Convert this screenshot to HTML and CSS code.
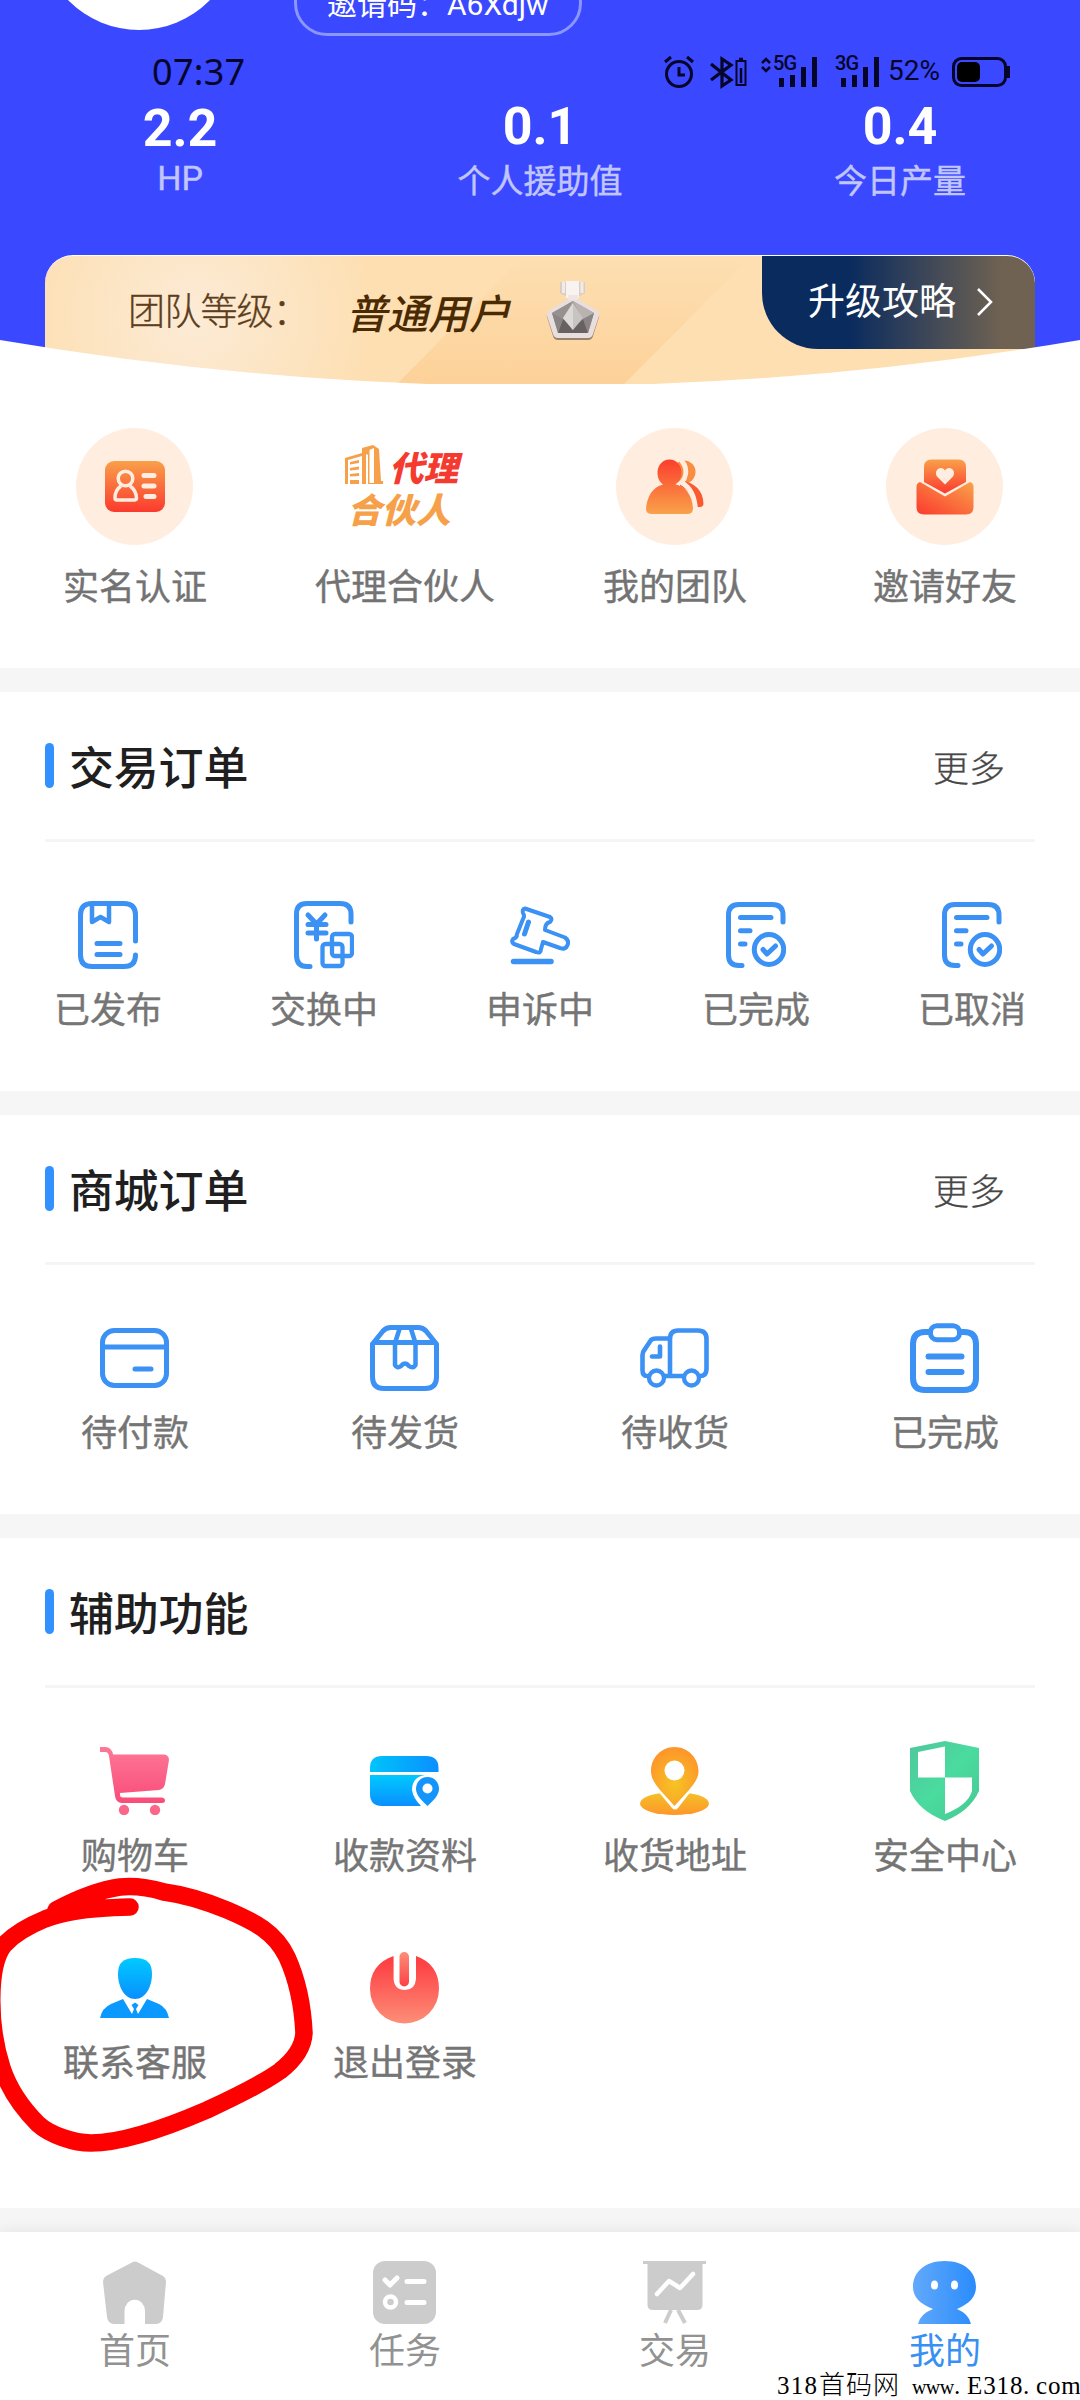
FILE: index.html
```html
<!DOCTYPE html>
<html lang="zh-CN">
<head>
<meta charset="utf-8">
<title>我的</title>
<link rel="stylesheet" href="styles.css">
</head>
<body>
<svg class="defs" width="0" height="0" aria-hidden="true">
  <defs>
    <linearGradient id="fire" x1="0" y1="0" x2="0" y2="1"><stop offset="0" stop-color="#f9a04a"/><stop offset="1" stop-color="#fb3a2e"/></linearGradient>
    <linearGradient id="fireUp" x1="0" y1="1" x2="0" y2="0"><stop offset="0" stop-color="#f9a24a"/><stop offset="1" stop-color="#fb3e2c"/></linearGradient>
    <linearGradient id="fireSide" x1="0" y1="1" x2="1" y2="0"><stop offset="0" stop-color="#fb3a2e"/><stop offset="1" stop-color="#f9a24a"/></linearGradient>
    <linearGradient id="pink" x1="0" y1="0" x2="0" y2="1"><stop offset="0" stop-color="#fd7896"/><stop offset="1" stop-color="#f94c79"/></linearGradient>
    <linearGradient id="sky" x1="0" y1="0" x2="0" y2="1"><stop offset="0" stop-color="#00caff"/><stop offset="1" stop-color="#0a8fff"/></linearGradient>
    <linearGradient id="skySide" x1="0" y1="0" x2="1" y2="0"><stop offset="0" stop-color="#00c4fa"/><stop offset="1" stop-color="#0a8fff"/></linearGradient>
    <radialGradient id="amber" cx=".5" cy=".62" r=".6"><stop offset="0" stop-color="#f6c423"/><stop offset="1" stop-color="#fd962b"/></radialGradient>
    <linearGradient id="amberBase" x1="0" y1="0" x2="0" y2="1"><stop offset="0" stop-color="#f5c226"/><stop offset="1" stop-color="#fd962b"/></linearGradient>
    <linearGradient id="mint" x1="0" y1="0" x2="1" y2="1"><stop offset="0" stop-color="#4fc79c"/><stop offset=".5" stop-color="#4adb9f"/><stop offset="1" stop-color="#46c892"/></linearGradient>
    <linearGradient id="coral" x1="0" y1="0" x2="0" y2="1"><stop offset=".1" stop-color="#fd4145"/><stop offset="1" stop-color="#fd8e78"/></linearGradient>
    <linearGradient id="coralBar" x1="0" y1="0" x2="0" y2="1"><stop offset="0" stop-color="#fd8e78"/><stop offset="1" stop-color="#fd4145"/></linearGradient>
    <linearGradient id="me" x1="0" y1="0" x2="1" y2="0"><stop offset="0" stop-color="#62a9fb"/><stop offset="1" stop-color="#2a8cfc"/></linearGradient>
  </defs>
</svg>

<div class="phone">
  <header class="hero">
    <div class="profile">
      <div class="avatar"></div>
      <div class="invite-code"><span>邀请码：</span><span>A6Xdjw</span></div>
    </div>

    <div class="statusbar">
      <span class="clock">07:37</span>
      <svg class="status-icons" width="122" height="34" viewBox="0 0 122 34" fill="none" stroke="#05052a" stroke-width="3">
        <circle cx="15" cy="19" r="12.5"/><path d="M15 12v8h6M1 7l6-5M29 7l-6-5"/>
        <path d="M47 9l20 16-9 6V4l9 6-20 15" stroke-width="3.200"/>
        <rect x="72.500" y="6" width="9" height="24" stroke-width="2"/><path d="M77 13v15M75 4h4" stroke-width="2.500"/>
        <path d="M98 8l4-4 4 4M98 12l4 4 4-4" stroke-width="2.500"/>
      </svg>
      <div class="signal five"><span>5G</span><svg width="39" height="32" viewBox="0 0 39 32"><path d="M0 22h5v9H0zM11 19h5v12h-5zM22 11h5v20h-5zM33 1h5v30h-5z"/></svg></div>
      <div class="signal three"><span>3G</span><svg width="39" height="32" viewBox="0 0 39 32"><path d="M0 22h5v9H0zM11 19h5v12h-5zM22 11h5v20h-5zM33 1h5v30h-5z"/></svg></div>
      <span class="percent">52%</span>
      <svg class="battery" width="59" height="32" viewBox="0 0 59 32"><rect x="1.500" y="2.500" width="52" height="27" rx="8" fill="none" stroke="#05052a" stroke-width="3"/><rect x="5" y="6" width="23" height="20" rx="5" fill="#000"/><path d="M55 10h3v12h-3z"/></svg>
    </div>

    <div class="stats">
      <div class="stat latin"><b>2.2</b><span>HP</span></div>
      <div class="stat"><b>0.1</b><span>个人援助值</span></div>
      <div class="stat"><b>0.4</b><span>今日产量</span></div>
    </div>

    <div class="level-card">
      <span class="level-label">团队等级：</span>
      <em class="level-name">普通用户</em>
      <svg class="medal" width="56" height="62" viewBox="0 0 56 62">
        <path d="M15 2h25v11l-9 5h-7l-9-5z" fill="#d9cdc6"/><path d="M21 1h13v17H21z" fill="#f8f3f1"/><path d="M18.500 2v11M37 2v11" stroke="#f3ebe8" stroke-width="3"/>
        <path d="M28 18L51 31Q55 33 54 37L48 56Q47 60 43 60H13Q9 60 8 56L2 37Q1 33 5 31Z" fill="#75655c" opacity=".75"/>
        <path d="M28 16L51 30Q55 32 54 36L48 54Q47 58 43 58H13Q9 58 8 54L2 36Q1 32 5 30Z" fill="#e9dede"/>
        <path d="M28 21L49 33L43 53H13L7 33Z" fill="#a39d9d"/>
        <path d="M28 21L49 33L38 39Z" fill="#b9b2b1"/><path d="M28 21L7 33L18 39Z" fill="#96908f"/><path d="M7 33L18 39L13 53ZM43 53L49 33L38 39Z" fill="#8b8484"/><path d="M18 39L28 48L38 39L43 53H13Z" fill="#686161"/>
        <path d="M28 23L38 38L28 50L18 38Z" fill="#c8c4c1"/><path d="M28 23V50L18 38Z" fill="#dcd9d6"/>
        <path d="M23 15h10v5h-10z" fill="#efe6e4"/>
      </svg>
      <a class="guide"><span>升级攻略</span><svg width="18" height="30" viewBox="0 0 18 30"><path d="M2 2l13 13L2 28" fill="none" stroke="#fff" stroke-width="2.500"/></svg></a>
    </div>
    <svg class="curve" width="1080" height="50" viewBox="0 0 1080 50"><path d="M0 6Q540 98 1080 6V50H0Z" fill="#fff"/></svg>
  </header>

  <nav class="quick">
    <a class="tile"><svg width="117" height="117" viewBox="0 0 117 117"><circle cx="58.500" cy="58.500" r="58.500" fill="#ffeee0"/>
      <rect x="29" y="33" width="60" height="51" rx="9" fill="url(#fire)"/>
      <g fill="none" stroke="#ffeee0" stroke-width="3.500"><circle cx="49.500" cy="50.500" r="7.300"/><path d="M45 58Q39 62 39 70Q39 72 41 72H58Q60.500 72 60.500 70Q60 62 54 58"/></g>
      <path d="M68 47.500h10M68 58h10M70 68.500h8" stroke="#ffeee0" stroke-width="5" stroke-linecap="round"/></svg><span>实名认证</span></a>
    <a class="tile"><svg width="120" height="117" viewBox="0 0 120 117" class="agent">
      <g fill="#f6a04b"><path d="M0 30L17 25V20L28 17L34 21L36 53H38V56H23V27L21 26V56H17V28L3 32V56H0Z"/><path d="M5 34l9-2v3l-9 1.500zM5 40l9-1.500v3l-9 1zM5 46l9-1v3l-9 .5zM5 52h9v4H5z"/></g><path d="M24.500 22L29 20V55H24.500Z" fill="#fff"/>
      <text x="44" y="53" fill="#f53a30">代理</text><text x="2" y="95" fill="#f7a04a">合伙人</text></svg><span>代理合伙人</span></a>
    <a class="tile"><svg width="117" height="117" viewBox="0 0 117 117"><circle cx="58.500" cy="58.500" r="58.500" fill="#ffeee0"/>
      <ellipse cx="68" cy="44" rx="11.500" ry="11.500" fill="#f98d41"/><path d="M64 52Q87 56 87.500 76Q87 79 84 79H79Q76 64 64 58Z" fill="#f95a31"/>
      <path d="M53.500 27.500a15.500 16 0 0 1 12 27Q79 62 79.500 84" fill="none" stroke="#ffeee0" stroke-width="5"/>
      <path d="M53.500 31.500c7 0 12 6 12 13 0 5-2 9-6 12 10 2 17 11 17.500 24q0 5.500-6 5.500H36q-6 0-6-5c1-13 7-22 17-24.500-4-3-5.500-7-5.500-12 0-7 5-13 12-13z" fill="url(#fireUp)"/></svg><span>我的团队</span></a>
    <a class="tile"><svg width="117" height="117" viewBox="0 0 117 117"><circle cx="58.500" cy="58.500" r="58.500" fill="#ffeee0"/>
      <path d="M38 39q0-7.500 7.500-7.500h27q7.500 0 7.500 7.500v15L59 65.500 38 54z" fill="url(#fire)"/>
      <path d="M59 56.500l-8-8c-4-6 4-12 8-6 4-6 12 0 8 6z" fill="#ffeee0"/>
      <path d="M34 54l25 14.500L84 54q3.500 1 3.500 5v20q0 7.500-7.500 7.500H38q-7.500 0-7.500-7.500V59q0-4 3.500-5z" fill="url(#fireSide)"/></svg><span>邀请好友</span></a>
  </nav>

  <section class="panel">
    <div class="panel-head"><i></i><h2>交易订单</h2><a>更多</a></div>
    <div class="grid five-col">
      <a class="item"><span class="icon"><svg class="line" width="60" height="68" viewBox="0 0 60 68"><path d="M57.500 40V14Q57.500 2.500 46 2.500H14Q2.500 2.500 2.500 14V54Q2.500 65.500 14 65.500H46Q57.500 65.500 57.500 54M19 42.500H42M19 53.500H42"/><path d="M14 3V21L22.500 16L31 21V3" stroke-width="4.500"/></svg></span><span>已发布</span></a>
      <a class="item"><span class="icon"><svg class="line" width="60" height="68" viewBox="0 0 60 68"><path d="M57 21V13Q57 2.500 46 2.500H13Q2.500 2.500 2.500 13V54Q2.500 65.500 13 65.500H16M14 14L22.500 23L31 14M14 23.500H32M14 32H32M22.500 23V38"/><rect x="38" y="33" width="20" height="22" rx="3" stroke-width="4.300"/><rect x="28.500" y="43" width="20" height="22" rx="3" stroke-width="4.300"/></svg></span><span>交换中</span></a>
      <a class="item"><span class="icon"><svg class="line" width="60" height="68" viewBox="0 0 60 68"><path d="M15 7.500L40 16Q43 18 40 21Q35 22 35 29L55 36.500Q60 40 57 45Q55 49 50 47L33 41L31 48Q31 53 26 51L4 43Q1 41 3 38Q7 37 7 33L13 18Q15 15 13 12Q12 8 15 7.500Z" stroke-width="4"/><path d="M18.500 21L14.500 33"/><path d="M3.500 60.500H41" stroke-width="5.500"/></svg></span><span>申诉中</span></a>
      <a class="item"><span class="icon"><svg class="line" width="60" height="68" viewBox="0 0 60 68"><path d="M57 21V14Q57 3.500 46 3.500H13Q2.500 3.500 2.500 14V54Q2.500 64.500 13 64.500H16M14.500 16.600H45M14.500 29.700H24M14.500 43H19M37 48.500L41 53L49.500 45"/><ellipse cx="43" cy="48.500" rx="14.700" ry="15"/></svg></span><span>已完成</span></a>
      <a class="item"><span class="icon"><svg class="line" width="60" height="68" viewBox="0 0 60 68"><path d="M57 21V14Q57 3.500 46 3.500H13Q2.500 3.500 2.500 14V54Q2.500 64.500 13 64.500H16M14.500 16.600H45M14.500 29.700H24M14.500 43H19M37 48.500L41 53L49.500 45"/><ellipse cx="43" cy="48.500" rx="14.700" ry="15"/></svg></span><span>已取消</span></a>
    </div>
  </section>

  <section class="panel">
    <div class="panel-head"><i></i><h2>商城订单</h2><a>更多</a></div>
    <div class="grid">
      <a class="item"><span class="icon"><svg class="line" width="69" height="60" viewBox="0 0 69 60"><rect x="2.500" y="2.500" width="64" height="55" rx="12"/><path d="M3 19H66M35 41H51"/></svg></span><span>待付款</span></a>
      <a class="item"><span class="icon"><svg class="line" width="69" height="66" viewBox="0 0 69 66"><path d="M2.500 19V52Q2.500 63.500 14 63.500H55Q66.500 63.500 66.500 52V19L56 6Q53 2.500 48 2.500H21Q16 2.500 13 6L2.500 19M4 17.500H65"/><path d="M29.500 4L25 18V40Q27 44 31 41Q35 36 39 41Q43 44 45.500 40V18L41 4" stroke-width="4.500"/></svg></span><span>待发货</span></a>
      <a class="item"><span class="icon"><svg class="line" width="69" height="60" viewBox="0 0 69 60"><path d="M7 48Q2.500 48 2.500 42V27Q2.500 24 5 21L11 12Q12.500 10.500 16 10.500H30M30 48V11Q30 2.500 38 2.500H58Q66.500 2.500 66.500 11V41Q66.500 48 60 48M25 48H43M20 18.500V28.500H12" stroke-width="4.600"/><circle cx="16.500" cy="50" r="7.500" stroke-width="4.300"/><circle cx="51.500" cy="50" r="7.500" stroke-width="4.300"/></svg></span><span>待收货</span></a>
      <a class="item"><span class="icon"><svg class="line" width="69" height="70" viewBox="0 0 69 70"><path d="M18 9H15Q3 9 3 21V55Q3 67 15 67H54Q66 67 66 55V21Q66 9 54 9H52M18.500 33.500H51.500M18.500 49H51.500" stroke-width="6"/><rect x="20.500" y="2.700" width="29" height="14" rx="6.500"/></svg></span><span>已完成</span></a>
    </div>
  </section>

  <section class="panel tools">
    <div class="panel-head"><i></i><h2>辅助功能</h2></div>
    <div class="grid">
      <a class="item"><span class="icon"><svg width="69" height="68" viewBox="0 0 69 68"><path d="M0 0H6Q12 1 13 7.500H64Q69 8 69 13L65 37Q64 42 59 43L20 46V48Q20 50.500 23 50.500H62Q65 51 65 53.500Q65 56 62 56H22Q16 56 15 49L9 9Q8.500 5 5 5H0Z" fill="url(#pink)"/><circle cx="24" cy="63" r="5.200" fill="#fb668b"/><circle cx="55" cy="63" r="5.200" fill="#fb668b"/></svg></span><span>购物车</span></a>
      <a class="item"><span class="icon"><svg width="69" height="50" viewBox="0 0 69 50"><path d="M0 16V12Q0 0 12 0H56Q68.500 0 68.500 12V16Z" fill="url(#skySide)"/><path d="M0 19H68V50H12Q0 50 0 38Z" fill="url(#sky)"/><path d="M69 19H55Q42 21 42 34Q43 42 51 50H69Z" fill="#fff"/><path d="M57.500 21C50 21 46 27 46 33C46 39 52 45 57.500 50C63 45 69 39 69 33C69 27 65 21 57.500 21Z" fill="#1395fb"/><circle cx="57.500" cy="32.500" r="5" fill="#fff"/></svg></span><span>收款资料</span></a>
      <a class="item"><span class="icon"><svg width="69" height="68" viewBox="0 0 69 68"><ellipse cx="34.500" cy="56.500" rx="34.500" ry="11.500" fill="url(#amberBase)"/><path d="M17 43L32 61Q35 64 38 61L52 43Z" fill="#fff"/><path d="M34.500 0C21 0 11 11 11 24C11 32 16 38 20 43L34.500 59L49 43C53 38 58.500 32 58.500 24C58.500 11 48 0 34.500 0Z" fill="url(#amber)"/><circle cx="34.500" cy="23.500" r="10" fill="#fff"/></svg></span><span>收货地址</span></a>
      <a class="item"><span class="icon"><svg width="69" height="80" viewBox="0 0 69 80"><path d="M35 0L69 7V50Q60 70 35 80Q9 70 0 50V7Z" fill="url(#mint)"/><path d="M8 11L35 5.500V36.500H8ZM35 36.500H62V50Q58 64 35 73Z" fill="#fff"/></svg></span><span>安全中心</span></a>
      <a class="item"><span class="icon"><svg width="69" height="60" viewBox="0 0 69 60"><path d="M35 0C47 0 52 5 52 16C52 28 46 41 35 41C24 41 18 28 18 16C18 5 23 0 35 0Z" fill="url(#sky)"/><path d="M23 41L32 56L34 51L31.500 47L35 44.500L38.500 47L36 51L38 56L47 41L59 46Q67 50 69 60H0Q2 50 11 46Z" fill="#0b98ff"/></svg></span><span>联系客服</span></a>
      <a class="item"><span class="icon"><svg width="69" height="72" viewBox="0 0 69 72"><path d="M23.600 4Q0 12 0 37A34.500 34.500 0 0 0 69 37Q69 12 46 4V27Q45 38 35 38Q24.500 38 23.600 27Z" fill="url(#coral)"/><rect x="29.500" y="0" width="9.500" height="34.500" rx="4.700" fill="url(#coralBar)"/></svg></span><span>退出登录</span></a>
    </div>
    <svg class="marker" width="330" height="290" viewBox="0 1870 330 290"><path d="M130 1907Q95 1908 76 1911Q58 1914 45 1919C28 1926 14 1934 4 1945C-12 1965 -12 2025 2 2068C10 2092 24 2110 38 2124C50 2135 74 2143 91 2143C125 2143 170 2126 207 2110C235 2097 262 2084 280 2071Q303 2053 304 2033Q302 1990 287 1957C275 1932 255 1922 227 1910C205 1901 187 1895 164 1892Q140 1885 120 1887Q92 1891 56 1910L80 1906" fill="none" stroke="#fe0000" stroke-width="17.500" stroke-linecap="round" stroke-linejoin="round"/></svg>
  </section>

  <nav class="tabbar">
    <a class="tab"><svg width="63" height="63" viewBox="0 0 63 63"><path d="M28 2Q32 -1 36 2L60 15Q63 17 63 21L60 56Q59 63 53 63H42V50A10 11 0 0 0 21.500 50V63H11Q5 63 4 56L0 21Q0 17 3 15Z" fill="#ccc"/></svg><span>首页</span></a>
    <a class="tab"><svg width="63" height="63" viewBox="0 0 63 63"><rect width="63" height="63" rx="12" fill="#ccc"/><path d="M12 19L17 24L24 17M34 20.500H51M34 41.500H51" fill="none" stroke="#fff" stroke-width="5" stroke-linecap="round" stroke-linejoin="round"/><circle cx="17.500" cy="41" r="5.500" fill="none" stroke="#fff" stroke-width="4.500"/></svg><span>任务</span></a>
    <a class="tab"><svg width="63" height="63" viewBox="0 0 63 63"><path d="M0 0H63V3H59.500V44Q59.500 49 54 49H10Q4.500 49 4.500 44V3H0Z" fill="#ccc"/><path d="M28 49L22 62M35 49L42 62" stroke="#ccc" stroke-width="4"/><path d="M14 33L26 20L37 27L50 13" fill="none" stroke="#fff" stroke-width="4.500" stroke-linecap="round" stroke-linejoin="round"/></svg><span>交易</span></a>
    <a class="tab active"><svg width="63" height="63" viewBox="0 0 63 63"><path d="M31.500 0C52 0 63 11 63 26C63 36 56 43 44 48Q56 53 58 63H5Q7 53 20 48C7 43 0 36 0 26C0 11 12 0 31.500 0Z" fill="url(#me)"/><ellipse cx="21.500" cy="24" rx="3.500" ry="4.500" fill="#fff"/><ellipse cx="41.500" cy="24" rx="3.500" ry="4.500" fill="#fff"/></svg><span>我的</span></a>
    <div class="watermark"><span class="num">318</span><span class="han">首码网</span><span class="www">www</span><span class="dot">.</span><span class="site">E318</span><span class="dot">.</span><span class="com">com</span></div>
  </nav>
</div>
</body>
</html>
```
FILE: styles.css
```css
* { box-sizing: border-box; }
body { margin: 0; background: #fff; font-family: Roboto, "Noto Sans CJK SC", sans-serif; }
svg { display: block; flex: none; }
.defs { position: absolute; }

.phone { width: 1080px; height: 2400px; overflow: hidden; display: flex; flex-direction: column; background: #f6f6f6; position: relative; }

/* blue header */
.hero { height: 384px; flex: none; background: #3a48ff; position: relative; overflow: hidden; }
.profile { display: flex; align-items: flex-end; height: 36px; }
.avatar { width: 198px; height: 198px; border-radius: 50%; background: #fff; margin: 0 0 6px 40px; flex: none; }
.invite-code { width: 288px; height: 66px; margin-left: 56px; border: 3px solid #8c96ff; border-radius: 33px; color: #fff; font-size: 30px; line-height: 64px; display: flex; padding: 0 0 0 30px; white-space: nowrap; flex: none; }
.invite-code span:last-child { font-size: 30px; }

.statusbar { display: flex; height: 34px; margin-top: 19px; padding-left: 152px; align-items: center; color: #05052a; }
.statusbar svg { fill: #05052a; }
.statusbar .status-icons { fill: none; margin-left: 417px; }
.clock { font: 36px/34px "Noto Sans", sans-serif; width: 95px; white-space: nowrap; letter-spacing: .3px; }
.signal { position: relative; height: 32px; width: 44px; }
.signal span { position: absolute; left: 0; top: 0; font-size: 20px; line-height: 15px; letter-spacing: -.8px; font-weight: 500; }
.signal svg { position: absolute; left: 6px; top: 0; }
.five { margin-left: -13px; }
.three { margin-left: 18px; }
.percent { font-size: 28px; line-height: 28px; width: 57px; margin-left: 9px; white-space: nowrap; position: relative; top: -1px; }
.battery { margin-left: 7px; }

.stats { display: flex; margin-top: 7px; height: 159px; }
.stat { width: 360px; text-align: center; color: #fff; display: flex; flex-direction: column; }
.stat b { font-size: 52px; line-height: 61px; }
.stat span { font-size: 33px; line-height: 50px; color: #c2c6ff; -webkit-text-stroke: .4px; }
.stat.latin b { padding-top: 2px; }
.stat.latin span { line-height: 38px; font-size: 34px; }

.level-card { margin: 0 45px; width: 990px; height: 129px; border-radius: 28px 28px 0 0; display: flex; align-items: flex-start; padding-left: 83px; border-top: 1px solid #fff; position: relative; overflow: hidden; background: radial-gradient(circle at 150px 60px, #fcebd6, #fddfb2 180px); }
.level-card::before { content: ""; position: absolute; left: 351px; top: 0; width: 355px; height: 129px; clip-path: polygon(0 100%, 36% 0, 100% 0, 64% 100%); background: linear-gradient(rgba(253,208,150,0), rgba(253,208,150,.9)); }
.level-card > * { position: relative; }
.level-label { font-size: 37px; line-height: 54px; margin-top: 30px; color: #5c3d1c; width: 204px; margin-right: 16px; white-space: nowrap; font-weight: 300; letter-spacing: -.8px; -webkit-text-stroke: .3px; }
.level-name { font-size: 41px; line-height: 58px; margin-top: 30px; color: #4a2a02; width: 171px; font-weight: 500; white-space: nowrap; margin-left: -2px; margin-right: 2px; }
.medal { margin: 24px 0 0 26px; }
.guide { margin-left: auto; width: 273px; height: 94px; border-radius: 0 28px 0 56px; background: linear-gradient(90deg, #0a2b5e 32%, #6f6252 88%); color: #fff; font-size: 37px; line-height: 92px; display: flex; align-items: center; padding-left: 46px; gap: 20px; margin-top: -1px; }
.guide span { padding-top: 2px; }
.curve { position: absolute; left: 0; bottom: 0; }

/* shortcuts */
.quick { height: 284px; flex: none; background: #fff; display: grid; grid-template-columns: repeat(4, 1fr); padding-top: 44px; }
.tile { display: flex; flex-direction: column; align-items: center; gap: 17px; font-size: 36px; line-height: 52px; color: #737373; -webkit-text-stroke: .4px; }
.tile svg, .icon svg, .tab svg { margin-right: 1px; }
.agent text { font: italic 900 34.500px "Noto Sans CJK SC", sans-serif; -webkit-text-stroke: 0; }

/* panels */
.panel { background: #fff; height: 399px; flex: none; margin-top: 24px; position: relative; }
.tools { height: 670px; }
.panel-head { height: 150px; margin: 0 45px; border-bottom: 3px solid #f5f5f5; display: flex; align-items: flex-start; padding-right: 30px; }
.panel-head i { width: 9px; height: 45px; border-radius: 5px; background: #3391ff; margin-top: 51px; }
.panel-head h2 { margin: 46px auto 0 15px; font-size: 45px; line-height: 64px; font-weight: 500; color: #1f1f1f; letter-spacing: -.2px; }
.panel-head a { font-size: 36px; line-height: 52px; margin-top: 52px; color: #474747; font-weight: 300; -webkit-text-stroke: .3px; }
.grid { display: grid; grid-template-columns: repeat(4, 1fr); padding-top: 53px; row-gap: 65px; }
.five-col { grid-template-columns: repeat(5, 1fr); }
.item { display: flex; flex-direction: column; align-items: center; gap: 10px; font-size: 36px; line-height: 52px; color: #757575; -webkit-text-stroke: .4px; }
.icon { height: 80px; display: flex; align-items: center; }
.line { fill: none; stroke: #3b91f4; stroke-width: 5; stroke-linecap: round; stroke-linejoin: round; }
.marker { position: absolute; left: 0; top: 332px; }

/* bottom bar */
.tabbar { margin-top: 24px; height: 168px; flex: none; background: #fff; display: grid; grid-template-columns: repeat(4, 1fr); padding-top: 29px; position: relative; box-shadow: 0 -2px 14px rgba(0,0,0,.07); }
.tab { display: flex; flex-direction: column; align-items: center; gap: 2px; font-size: 36px; line-height: 52px; color: #929292; }
.active { color: #3890f2; }
.watermark { position: absolute; left: 777px; bottom: 0; display: flex; align-items: baseline; font: 25px/26px "Liberation Serif", serif; color: #000; white-space: nowrap; }
.num, .site { letter-spacing: 1.2px; }
.num { width: 42px; }
.han { font-family: "Noto Sans CJK SC", sans-serif; font-weight: 300; font-size: 26px; line-height: 26px; letter-spacing: 1px; width: 93px; }
.www { font-size: 20px; letter-spacing: -.6px; width: 42px; }
.dot { width: 13px; }
.site { width: 56px; letter-spacing: .9px; }
.com { font-size: 25px; letter-spacing: .8px; }
```
